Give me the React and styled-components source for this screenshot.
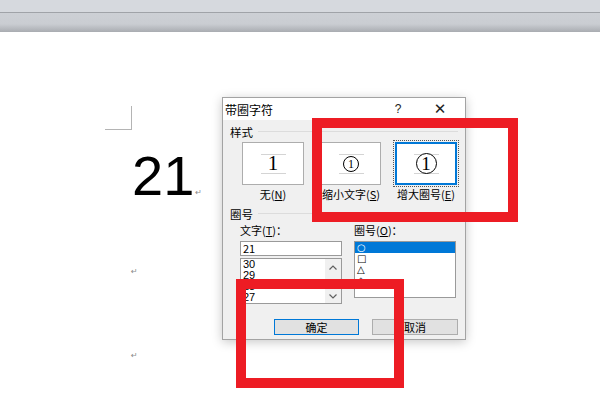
import React from 'react';
import styled, { createGlobalStyle } from 'styled-components';

const GlobalStyle = createGlobalStyle`
  html, body {
    margin: 0;
    padding: 0;
    background: #fff;
  }
  body {
    width: 600px;
    height: 400px;
    overflow: hidden;
    font-family: "Noto Sans CJK SC", "Liberation Sans", sans-serif;
  }
`;

const Screen = styled.div`
  position: relative;
  width: 600px;
  height: 400px;
  overflow: hidden;
  background: #fff;
`;

const Ribbon = styled.div`
  height: 32px;
  background: linear-gradient(#d6d9de 0, #d6d9de 12px, #a0a3a8 12px, #a0a3a8 13px, #cdd0d5 13px, #cacdd2 24px, #a9acb1 32px);
`;

const Page = styled.div`
  padding-left: 105px;
  padding-top: 74px;
`;

const CornerMark = styled.div`
  width: 27px;
  height: 24px;
  border-right: 1px solid #b4b4b4;
  border-bottom: 1px solid #b4b4b4;
  box-sizing: border-box;
`;

const Para = styled.div`
  display: flex;
  align-items: ${(p) => (p.end ? 'flex-end' : 'baseline')};
  height: ${(p) => p.h}px;
  margin-top: ${(p) => p.top || 0}px;
  padding-left: ${(p) => p.indent || 0}px;
`;

const BigText = styled.span`
  font-family: "Liberation Sans", Arial, sans-serif;
  font-size: 56px;
  line-height: 56px;
  color: #000;
`;

const Mark = styled.span`
  font-family: "DejaVu Sans", sans-serif;
  font-size: 8px;
  line-height: 8px;
  color: #8a8a8a;
  margin-left: 1px;
`;

const Dialog = styled.div`
  position: absolute;
  left: 222px;
  top: 97px;
  width: 244px;
  height: 243px;
  box-sizing: border-box;
  border: 1px solid #a3a3a3;
  background: #f0f0f0;
  box-shadow: 0 2px 10px rgba(0, 0, 0, 0.22);
  font-size: 11px;
  color: #000;
`;

const TitleBar = styled.div`
  height: 22px;
  background: #fff;
  display: flex;
  align-items: center;
  padding-left: 2px;
`;

const TitleText = styled.span`
  font-size: 12px;
  flex: 1;
`;

const TitleBtn = styled.span`
  width: ${(p) => p.w}px;
  text-align: center;
  font-family: ${(p) => (p.serif ? '"DejaVu Sans"' : '"Liberation Sans"')}, sans-serif;
  font-size: ${(p) => p.fs}px;
  color: #222;
`;

const Body = styled.div`
  padding: 5px 7px 0 7px;
`;

const GroupHead = styled.div`
  display: flex;
  align-items: center;
  height: 13px;
  margin-top: ${(p) => p.top || 0}px;
  font-size: 11.5px;

  &:after {
    content: '';
    flex: 1;
    border-top: 1px solid #dcdcdc;
    margin-left: 5px;
  }
`;

const PreviewRow = styled.div`
  display: flex;
  padding-left: 12px;
  margin-top: 4px;
`;

const PreviewCol = styled.div`
  width: ${(p) => p.w}px;
  margin-right: ${(p) => p.gap || 0}px;
  display: flex;
  flex-direction: column;
  align-items: center;
`;

const PreviewBox = styled.div`
  width: 100%;
  height: 43px;
  box-sizing: border-box;
  background: #fff;
  border: 1px solid ${(p) => (p.active ? '#0078d7' : '#adadad')};
  outline: ${(p) => (p.active ? '1px dotted #555' : 'none')};
  outline-offset: 1px;
  box-shadow: ${(p) => (p.active ? 'inset 0 0 0 1px #0078d7' : 'none')};
  display: flex;
  align-items: center;
  justify-content: center;
`;

const Guide = styled.div`
  width: ${(p) => p.w}px;
  height: 18px;
  border-top: 1px solid #d4d4d4;
  border-bottom: 1px solid #d4d4d4;
  display: flex;
  align-items: center;
  justify-content: center;
  position: relative;
`;

const Digit = styled.span`
  font-family: "Liberation Serif", serif;
  font-size: ${(p) => p.fs}px;
  line-height: 1;
`;

const Ring = styled.span`
  width: ${(p) => p.d}px;
  height: ${(p) => p.d}px;
  border: 1px solid #000;
  border-radius: 50%;
  box-sizing: border-box;
  display: flex;
  align-items: center;
  justify-content: center;
  background: #fff;
`;

const PreviewLabel = styled.div`
  white-space: nowrap;
  margin-top: 3px;
  font-size: 11px;
  line-height: 12px;
`;

const Fields = styled.div`
  display: flex;
  padding-left: 10px;
  margin-top: 4px;
`;

const FieldCol = styled.div`
  width: 102px;
  margin-right: ${(p) => p.gap || 0}px;
`;

const FieldLabel = styled.div`
  height: 13px;
  line-height: 13px;
  font-size: 11px;
  margin-bottom: 4px;
  white-space: nowrap;
`;

const TextInput = styled.div`
  height: 15px;
  box-sizing: border-box;
  border: 1px solid #9a9a9a;
  background: #fff;
  padding-left: 2px;
  font-size: 11px;
  line-height: 13px;
`;

const ListBox = styled.div`
  height: ${(p) => p.h}px;
  margin-top: ${(p) => p.top || 0}px;
  box-sizing: border-box;
  border: 1px solid #9a9a9a;
  background: #fff;
  display: flex;
  overflow: hidden;
`;

const Items = styled.div`
  flex: 1;
`;

const Item = styled.div`
  height: 11px;
  line-height: 11px;
  overflow: hidden;
  padding-left: 2px;
  font-family: ${(p) => (p.shape ? '"DejaVu Sans"' : '"Liberation Sans"')}, sans-serif;
  font-size: ${(p) => (p.shape ? 10 : 11)}px;
  background: ${(p) => (p.sel ? '#0078d7' : 'transparent')};
  color: ${(p) => (p.sel ? '#fff' : '#000')};
`;

const ScrollBar = styled.div`
  width: 16px;
  background: #f0f0f0;
  display: flex;
  flex-direction: column;
  justify-content: space-between;
  align-items: center;
  padding: 6px 0 4px;
`;

const Buttons = styled.div`
  display: flex;
  padding-left: 44px;
  margin-top: 15px;
`;

const Button = styled.div`
  width: ${(p) => p.w}px;
  height: 16px;
  box-sizing: border-box;
  margin-right: ${(p) => p.gap || 0}px;
  border: 1px solid ${(p) => (p.primary ? '#0078d7' : '#adadad')};
  background: #e1e1e1;
  font-size: 11px;
  line-height: 14px;
  text-align: center;
`;

const RedBox = styled.div`
  position: absolute;
  left: ${(p) => p.x}px;
  top: ${(p) => p.y}px;
  width: ${(p) => p.w}px;
  height: ${(p) => p.h}px;
  box-sizing: border-box;
  border: 10px solid #ed1c24;
`;

const Chevron = ({ up }) => (
  <svg width="8" height="5" viewBox="0 0 8 5">
    <path d={up ? 'M0.5 4.5 L4 1 L7.5 4.5' : 'M0.5 0.5 L4 4 L7.5 0.5'} fill="none" stroke="#606060" strokeWidth="1.2" />
  </svg>
);

const numbers = ['30', '29', '28', '27'];
const shapes = ['○', '□', '△', '◇'];

export default function App() {
  return (
    <Screen>
      <GlobalStyle />
      <Ribbon />
      <Page>
        <CornerMark />
        <Para h={60} top={18} indent={27}>
          <BigText>21</BigText>
          <Mark>↵</Mark>
        </Para>
        <Para h={68} indent={25} end>
          <Mark>↵</Mark>
        </Para>
        <Para h={84} indent={25} end>
          <Mark>↵</Mark>
        </Para>
      </Page>

      <Dialog>
        <TitleBar>
          <TitleText>带圈字符</TitleText>
          <TitleBtn w={34} fs={12}>?</TitleBtn>
          <TitleBtn w={50} fs={15} serif>✕</TitleBtn>
        </TitleBar>
        <Body>
          <GroupHead>样式</GroupHead>
          <PreviewRow>
            <PreviewCol w={62} gap={17}>
              <PreviewBox>
                <Guide w={25}>
                  <Digit fs={21}>1</Digit>
                </Guide>
              </PreviewBox>
              <PreviewLabel>无(<u>N</u>)</PreviewLabel>
            </PreviewCol>
            <PreviewCol w={60} gap={14}>
              <PreviewBox>
                <Guide w={25}>
                  <Ring d={16}>
                    <Digit fs={12}>1</Digit>
                  </Ring>
                </Guide>
              </PreviewBox>
              <PreviewLabel>缩小文字(<u>S</u>)</PreviewLabel>
            </PreviewCol>
            <PreviewCol w={62}>
              <PreviewBox active>
                <Guide w={25}>
                  <Ring d={21}>
                    <Digit fs={19}>1</Digit>
                  </Ring>
                </Guide>
              </PreviewBox>
              <PreviewLabel>增大圈号(<u>E</u>)</PreviewLabel>
            </PreviewCol>
          </PreviewRow>

          <GroupHead top={7}>圈号</GroupHead>
          <Fields>
            <FieldCol gap={12}>
              <FieldLabel>文字(<u>T</u>)：</FieldLabel>
              <TextInput>21</TextInput>
              <ListBox h={46} top={2}>
                <Items>
                  {numbers.map((n) => (
                    <Item key={n}>{n}</Item>
                  ))}
                </Items>
                <ScrollBar>
                  <Chevron up />
                  <Chevron />
                </ScrollBar>
              </ListBox>
            </FieldCol>
            <FieldCol>
              <FieldLabel>圈号(<u>O</u>)：</FieldLabel>
              <ListBox h={57}>
                <Items>
                  {shapes.map((s, i) => (
                    <Item key={s} shape sel={i === 0}>{s}</Item>
                  ))}
                </Items>
              </ListBox>
            </FieldCol>
          </Fields>

          <Buttons>
            <Button w={85} gap={13} primary>确定</Button>
            <Button w={86}>取消</Button>
          </Buttons>
        </Body>
      </Dialog>

      <RedBox x={312} y={118} w={206} h={104} />
      <RedBox x={236} y={279} w={168} h={109} />
    </Screen>
  );
}
